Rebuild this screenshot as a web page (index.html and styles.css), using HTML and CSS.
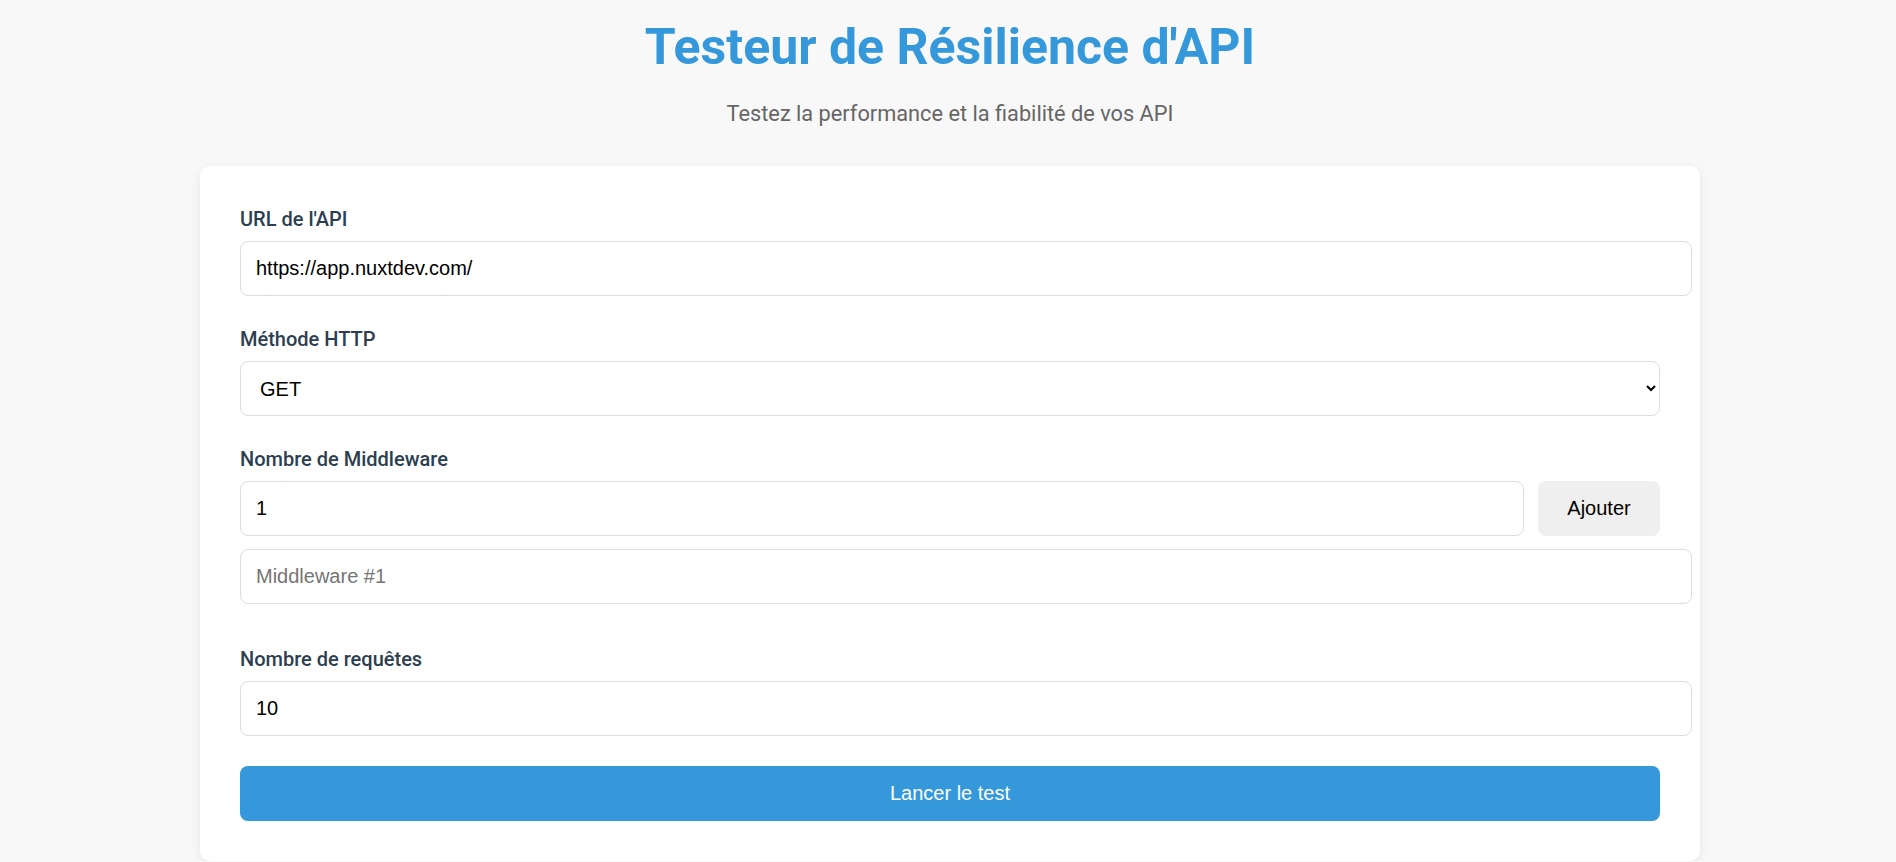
FILE: index.html
```html
<!DOCTYPE html>
<html lang="fr">
<head>
<meta charset="utf-8">
<title>Testeur de Résilience d'API</title>
<link rel="stylesheet" href="styles.css">
</head>
<body>
<div class="page">
  <h1 class="title">Testeur de Résilience d'API</h1>
  <p class="subtitle">Testez la performance et la fiabilité de vos API</p>
  <div class="card">
    <div class="group">
      <label class="label" for="url">URL de l'API</label>
      <input class="field" id="url" type="text" value="https://app.nuxtdev.com/">
    </div>
    <div class="group">
      <label class="label" for="method">Méthode HTTP</label>
      <select class="select" id="method">
        <option>GET</option>
        <option>POST</option>
        <option>PUT</option>
        <option>DELETE</option>
      </select>
    </div>
    <div class="group">
      <label class="label" for="mw">Nombre de Middleware</label>
      <div class="row">
        <input class="field field-grow" id="mw" type="number" value="1">
        <button class="btn-secondary" type="button">Ajouter</button>
      </div>
      <div class="mw-list">
        <input class="field" type="text" placeholder="Middleware #1">
      </div>
    </div>
    <div class="group">
      <label class="label" for="req">Nombre de requêtes</label>
      <input class="field" id="req" type="number" value="10">
    </div>
    <button class="btn-primary" type="button">Lancer le test</button>
  </div>
</div>
</body>
</html>
```
FILE: styles.css
```css
html, body {
  margin: 0;
  padding: 0;
  background: #f8f8f8;
}

body {
  font-family: Roboto, "Liberation Sans", Arial, sans-serif;
}

.page {
  padding: 18px 0 0 4px;
  display: flex;
  flex-direction: column;
  align-items: center;
}

.title {
  margin: 0 0 25px;
  font-size: 50px;
  line-height: 58px;
  font-weight: 700;
  color: #3498db;
  text-align: center;
}

.subtitle {
  margin: 0 0 39px;
  font-size: 21.75px;
  line-height: 26px;
  color: #666;
  text-align: center;
}

.card {
  width: 1500px;
  box-sizing: border-box;
  padding: 40px;
  background: #fff;
  border-radius: 10px;
  box-shadow: 0 2px 10px rgba(0, 0, 0, 0.08);
}

.group {
  margin-bottom: 30px;
}

.label {
  display: block;
  margin-bottom: 9px;
  font-size: 20px;
  line-height: 26px;
  font-weight: 500;
  color: #2c3e50;
}

.field {
  display: block;
  width: 100%;
  padding: 15px;
  border: 1px solid #ddd;
  border-radius: 8px;
  font-family: "Liberation Sans", Arial, sans-serif;
  font-size: 20px;
  line-height: 23px;
  color: #000;
  background: #fff;
  outline: none;
}

.field::placeholder {
  color: #757575;
}

.field::-webkit-outer-spin-button,
.field::-webkit-inner-spin-button {
  -webkit-appearance: none;
  margin: 0;
}

.select {
  display: block;
  width: 100%;
  height: 55px;
  padding: 0 15px;
  border: 1px solid #ddd;
  border-radius: 8px;
  font-family: "Liberation Sans", Arial, sans-serif;
  font-size: 20px;
  color: #000;
  background: #fff;
}

.row {
  display: flex;
  gap: 14px;
}

.field-grow {
  flex: 1;
  width: auto;
  min-width: 0;
}

.btn-secondary {
  flex: none;
  width: 122px;
  padding: 0;
  border: none;
  border-radius: 8px;
  background: #efefef;
  font-family: "Liberation Sans", Arial, sans-serif;
  font-size: 20px;
  color: #000;
}

.mw-list {
  padding-top: 13px;
  padding-bottom: 12px;
}

.btn-primary {
  display: block;
  width: 100%;
  height: 55px;
  border: none;
  border-radius: 8px;
  background: #3498db;
  color: #fff;
  font-family: "Liberation Sans", Arial, sans-serif;
  font-size: 20px;
}
```
